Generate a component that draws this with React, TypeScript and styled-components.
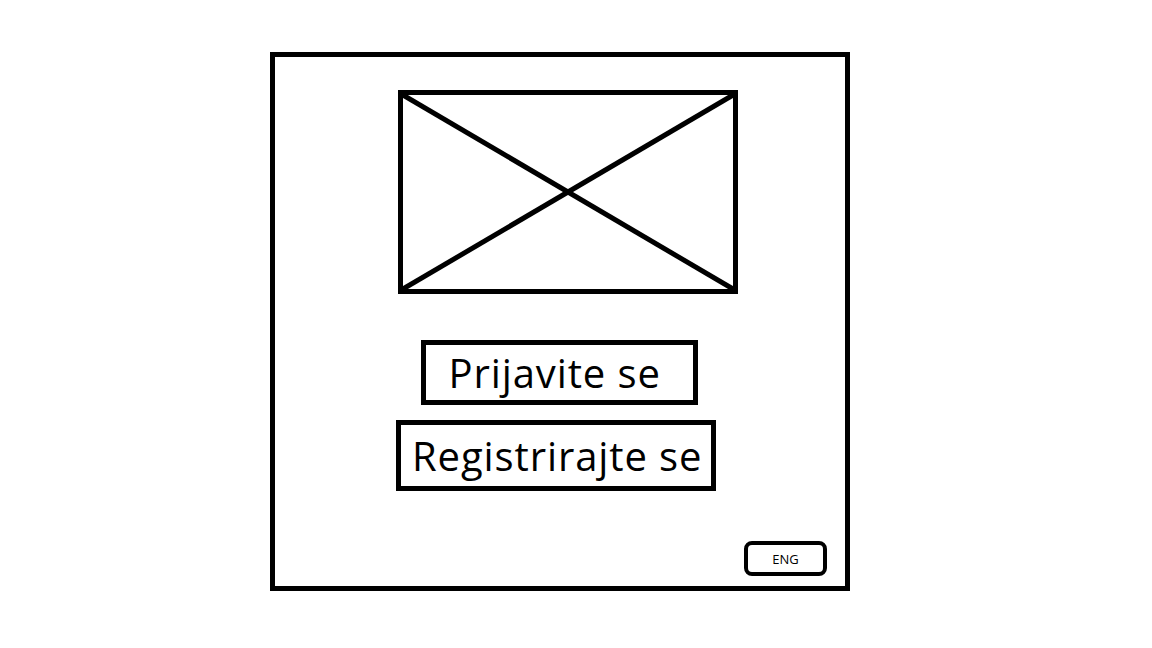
import React from "react";
import styled, { createGlobalStyle } from "styled-components";

const GlobalStyle = createGlobalStyle`
  body {
    margin: 0;
    background: #ffffff;
    font-family: "Open Sans", sans-serif;
  }
`;

export default function App() {
  return (
    <>
      <GlobalStyle />
      <Page>
        <Frame>
          <ImagePlaceholder>
            <svg width="100%" height="100%" viewBox="0 0 330 194" preserveAspectRatio="none">
              <line x1="0" y1="0" x2="330" y2="194" stroke="#000" strokeWidth="5" />
              <line x1="330" y1="0" x2="0" y2="194" stroke="#000" strokeWidth="5" />
            </svg>
          </ImagePlaceholder>
          <BoxButton $width={277} $height={65} $pad={23} $shift={-1}>
            Prijavite se
          </BoxButton>
          <BoxButton $width={320} $height={71} $pad={11} $shift={-4} $gap={15}>
            Registrirajte se
          </BoxButton>
          <LangButton>ENG</LangButton>
        </Frame>
      </Page>
    </>
  );
}

const Page = styled.main`
  padding: 52px 0 0 270px;
`;

const Frame = styled.section`
  width: 580px;
  height: 539px;
  box-sizing: border-box;
  border: 5px solid #000;
  padding-top: 33px;
  display: flex;
  flex-direction: column;
  align-items: center;
`;

const ImagePlaceholder = styled.div`
  width: 340px;
  height: 204px;
  box-sizing: border-box;
  border: 5px solid #000;
  margin-left: 16px;
  flex-shrink: 0;

  svg {
    display: block;
  }
`;

const BoxButton = styled.button<{
  $width: number;
  $height: number;
  $pad: number;
  $shift: number;
  $gap?: number;
}>`
  width: ${(p) => p.$width}px;
  height: ${(p) => p.$height}px;
  box-sizing: border-box;
  margin-top: ${(p) => p.$gap ?? 46}px;
  margin-left: ${(p) => p.$shift * 2}px;
  padding: 0 0 0 ${(p) => p.$pad}px;
  border: 5px solid #000;
  background: #fff;
  color: #000;
  font-family: "Open Sans", sans-serif;
  font-size: 40px;
  letter-spacing: 0.9px;
  white-space: nowrap;
  text-align: left;
  flex-shrink: 0;
`;

const LangButton = styled.button`
  align-self: flex-end;
  margin: auto 18px 10px 0;
  width: 83px;
  height: 35px;
  box-sizing: border-box;
  border: 4px solid #000;
  border-radius: 8px;
  background: #fff;
  color: #000;
  font-family: "Open Sans", sans-serif;
  font-size: 13px;
  padding: 0;
`;
